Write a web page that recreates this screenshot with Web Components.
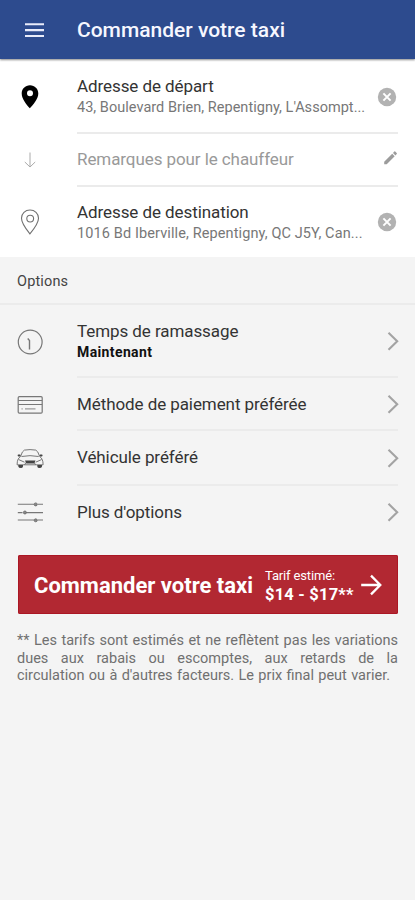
<!DOCTYPE html>
<html lang="fr">
<head>
<meta charset="utf-8">
<title>Commander votre taxi</title>
<style>
html, body { margin: 0; background: #f4f4f4; }
body { font-family: Roboto, "Liberation Sans", sans-serif; color: #303030; }
</style>
</head>
<body>
<taxi-app></taxi-app>
<script>
const ICONS = {
  menu: '<path d="M5 9.2H24M5 15.1H24M5 21H24" fill="none" stroke="#e9ecfa" stroke-width="2.1"/>',
  pin: '<path fill="#000" fill-rule="evenodd" d="M15 3.3C10.200 3.300 6.700 6.900 6.700 11.500C6.700 17.200 12 23.200 14.800 26.300C17.800 23 23.300 17.200 23.300 11.500C23.300 6.900 19.800 3.300 15 3.300ZM15 8.200A3 3 0 1 1 15 14.200A3 3 0 1 1 15 8.200Z"/>',
  down: '<path d="M15 7.500V21.500M9.800 17L15 22L20.200 17" fill="none" stroke="#aaa" stroke-width="1"/>',
  goal: '<g fill="none" stroke="#707070" stroke-width="1.100"><path d="M15 3C10.200 3 6.500 6.500 6.500 11.200C6.500 16.500 11.500 22.500 14.900 26.800C18.500 22.500 23.500 16.500 23.500 11.200C23.500 6.500 19.800 3 15 3Z"/><circle cx="15.200" cy="11.600" r="3.400"/></g>',
  clock: '<g fill="none" stroke="#777" stroke-width="1.200"><circle cx="15.200" cy="15" r="11.900"/><path d="M12.700 11.500L14.500 13.600V22.500" stroke-width="1.400"/></g>',
  card: '<g fill="none" stroke="#777" stroke-width="1.200"><rect x="3.200" y="6.600" width="24" height="16.500" rx="1.200"/><path d="M3.200 10.500H27.200M3.200 14.500H27.200"/><path d="M6.500 18.900H7.700M10 18.900H20.500" stroke="#999"/></g>',
  car: '<g fill="none" stroke="#777" stroke-width="1"><path d="M5.500 12.600Q7.300 6.700 9.400 6.100Q15 5.100 20.800 6.100Q22.900 6.700 24.700 12.600M6.500 12.500Q15 10.800 23.700 12.500M5.500 12.600C3.300 14 2.100 16.200 2.100 20.800H28.100C28.100 16.200 26.900 14 24.700 12.600M3.500 15.500L9.500 18.200M26.700 15.500L20.700 18.200M9.500 21L11 18.500M20.700 21L19.200 18.500"/></g><g fill="#444"><path d="M10 16.500H20.500L19.200 19.500H11.300Z"/><rect x="2.600" y="10.600" width="3" height="1.800" rx=".8"/><rect x="24.600" y="10.600" width="3" height="1.800" rx=".8"/><path d="M3.300 21H8V22.500Q7.600 24 6 24Q3.600 24 3.300 22.500ZM22.300 21H27V22.500Q26.700 24 24.300 24Q22.600 24 22.300 22.500Z"/></g>',
  sliders: '<path d="M2.800 7.200H19M22.500 7.200H28M2.800 15.600H7.500M11 15.600H28M2.800 23H19M22.500 23H28" fill="none" stroke="#777" stroke-width="1.100"/><g fill="#888" stroke="#666" stroke-width=".8"><circle cx="20.700" cy="7.400" r="1.500"/><circle cx="9.900" cy="15.500" r="1.500"/><circle cx="20.700" cy="23.300" r="1.500"/></g>',
  clear: '<circle cx="15" cy="15" r="9.200" fill="#b2b2b2"/><path d="M11.400 11.400L18.600 18.600M18.600 11.400L11.400 18.600" fill="none" stroke="#fff" stroke-width="2"/>',
  pencil: '<path fill="#9c9c9c" d="M9.200 21.300V18.700L17.200 10.700L19.700 13.200L11.700 21.300ZM18 9.900L19.300 8.600Q19.900 8.100 20.500 8.700L21.700 9.900Q22.300 10.500 21.700 11.100L20.500 12.400Z"/>',
  chevron: '<path d="M10.500 6.800L19.200 15.300L10.500 23.800" fill="none" stroke="#a3a3a3" stroke-width="2.100"/>',
  go: '<path d="M5.200 15H24M15 5.600L24.300 15L15 24.400" fill="none" stroke="#fff" stroke-width="2.300"/>'
};

const define = (name, markup, setup) => {
  const template = document.createElement('template');
  template.innerHTML = markup;
  customElements.define(name, class extends HTMLElement {
    connectedCallback() {
      if (this.shadowRoot) return;
      const root = this.attachShadow({ mode: 'open' });
      root.append(template.content.cloneNode(true));
      if (setup) setup(this, root);
    }
  });
};

define('taxi-icon', `<style>
:host { display: block; width: 30px; height: 30px; flex: none; }
svg { display: block; width: 30px; height: 30px; overflow: visible; }
</style><svg viewBox="0 0 30 30" aria-hidden="true"></svg>`, (host, root) => {
  root.querySelector('svg').innerHTML = ICONS[host.getAttribute('name')];
});

define('taxi-header', `<style>
:host { display: flex; box-sizing: border-box; height: 59px; padding: 0 0 0 20px; background: #2d4b8e; color: #f6f7ff; box-shadow: 0 1px 2px #0007; position: relative; }
taxi-icon { margin-top: 15px; width: 57px; }
h1 { margin: 17px 0 0; font-size: 21px; line-height: 26px; font-weight: 500; white-space: nowrap; }
</style><taxi-icon name="menu"></taxi-icon><h1><slot></slot></h1>`);

define('taxi-row', `<style>
:host { display: grid; grid-template-columns: 62px 1fr; box-sizing: border-box; height: var(--h); padding-left: 15px; }
.lead { padding-top: var(--icon-top); }
.body { display: grid; grid-template-columns: 1fr 30px; margin-right: 17px; border-bottom: 2px solid #ebebeb; }
:host([last]) .body { border-bottom: 0; }
.text { padding-top: var(--text-top); min-width: 0; white-space: nowrap; }
.label { display: block; font-size: 17px; line-height: 22px; letter-spacing: -.08px; color: var(--label, #333); }
.detail { display: block; font-size: 14.500px; line-height: 22px; letter-spacing: var(--ds, 0); color: #777; }
:host([strong]) .detail { font-size: 14px; line-height: 20px; letter-spacing: .38px; font-weight: 700; color: #111; }
.end { padding-top: var(--end-top); margin-left: var(--end-x, 0); }
</style><div class="lead"></div>
<div class="body"><div class="text"><span class="label"><slot></slot></span><span class="detail"><slot name="detail"></slot></span></div>
<div class="end"></div></div>`, (host, root) => {
  for (const [sel, attr] of [['.lead', 'icon'], ['.end', 'action']]) {
    const icon = document.createElement('taxi-icon');
    icon.setAttribute('name', host.getAttribute(attr));
    root.querySelector(sel).append(icon);
  }
});

define('taxi-section', `<style>
:host { display: block; box-sizing: border-box; height: 48px; padding: 15px 17px 0; border-bottom: 2px solid #ebebeb; font-size: 14.500px; line-height: 20px; letter-spacing: .15px; color: #444; }
</style><slot></slot>`);

define('taxi-order', `<style>
:host { display: block; margin: 0 17px 0 18px; }
button { display: flex; box-sizing: border-box; width: 380px; height: 59px; padding: 0 0 0 16px; border: 0; border-radius: 2px; background: #b22832; box-shadow: inset 0 0 0 1px #ab1724; color: #fff; font: inherit; text-align: left; white-space: nowrap; }
.name { width: 231px; padding-top: 17px; font-size: 22px; line-height: 28px; font-weight: 700; }
.fare { width: 91px; padding-top: 13px; }
.small { display: block; font-size: 13px; line-height: 16px; letter-spacing: -.15px; }
.price { display: block; font-size: 16.500px; line-height: 21px; font-weight: 700; letter-spacing: .2px; }
taxi-icon { padding-top: 15px; }
</style><button><span class="name"><slot></slot></span><span class="fare"><span class="small"><slot name="caption"></slot></span><span class="price"><slot name="price"></slot></span></span><taxi-icon name="go"></taxi-icon></button>`);

define('taxi-note', `<style>
:host { display: block; padding: 18px 17px 0; font-size: 14.500px; line-height: 17.600px; color: #707070; }
.line { display: block; text-align: justify; text-align-last: justify; white-space: nowrap; }
.line:last-child { width: 373px; }
</style><span class="line"><slot name="a"></slot></span><span class="line"><slot name="b"></slot></span><span class="line"><slot name="c"></slot></span>`);

define('taxi-app', `<style>
:host { display: block; height: 900px; overflow: hidden; background: #f4f4f4; }
.addresses { background: #fff; height: 198px; }
.order { padding-top: 16px; }
</style>
<taxi-header>Commander votre taxi</taxi-header>
<div class="addresses">
<taxi-row icon="pin" action="clear" style="--h:75px;--icon-top:23px;--text-top:16px;--end-top:23px;--end-x:4px;--ds:.03px">Adresse de départ<span slot="detail">43, Boulevard Brien, Repentigny, L'Assompt...</span></taxi-row>
<taxi-row icon="down" action="pencil" style="--h:53px;--icon-top:11px;--text-top:14px;--end-top:9px;--end-x:7px;--label:#999">Remarques pour le chauffeur</taxi-row>
<taxi-row last icon="goal" action="clear" style="--h:70px;--icon-top:20px;--text-top:14px;--end-top:20px;--end-x:4px;--ds:.11px">Adresse de destination<span slot="detail">1016 Bd Iberville, Repentigny, QC J5Y, Can...</span></taxi-row>
</div>
<taxi-section>Options</taxi-section>
<taxi-row strong icon="clock" action="chevron" style="--h:73px;--icon-top:22px;--text-top:15px;--end-top:21px;--end-x:10px">Temps de ramassage<span slot="detail">Maintenant</span></taxi-row>
<taxi-row icon="card" action="chevron" style="--h:53px;--icon-top:12px;--text-top:15px;--end-top:11px;--end-x:10px">Méthode de paiement préférée</taxi-row>
<taxi-row icon="car" action="chevron" style="--h:55px;--icon-top:13px;--text-top:15px;--end-top:12px;--end-x:10px">Véhicule préféré</taxi-row>
<taxi-row last icon="sliders" action="chevron" style="--h:53px;--icon-top:11px;--text-top:15px;--end-top:11px;--end-x:10px">Plus d'options</taxi-row>
<div class="order"><taxi-order>Commander votre taxi<span slot="caption">Tarif estimé:</span><span slot="price">$14 - $17**</span></taxi-order></div>
<taxi-note><span slot="a">** Les tarifs sont estimés et ne reflètent pas les variations</span><span slot="b">dues aux rabais ou escomptes, aux retards de la</span><span slot="c">circulation ou à d'autres facteurs. Le prix final peut varier.</span></taxi-note>`);
</script>
</body>
</html>
